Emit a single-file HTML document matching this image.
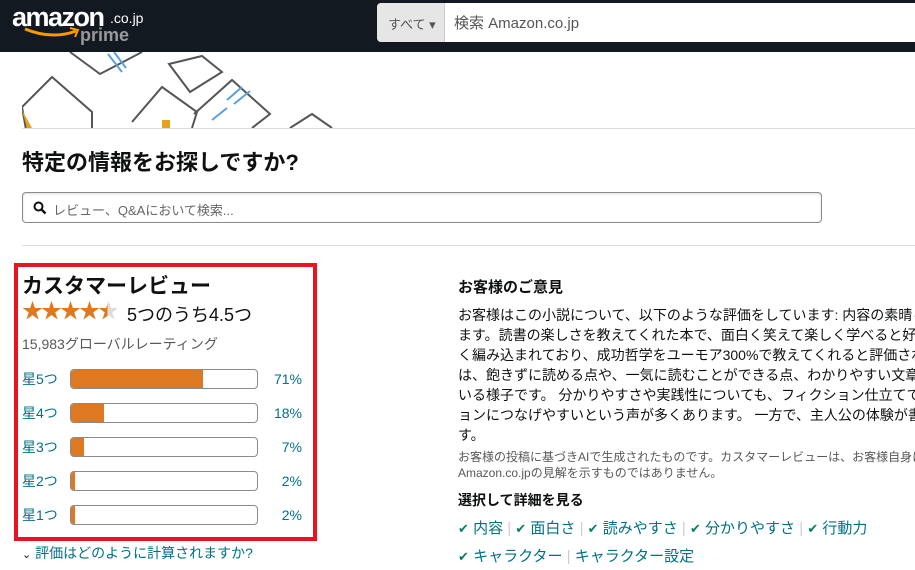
<!DOCTYPE html>
<html><head><meta charset="utf-8"><style>
*{margin:0;padding:0;box-sizing:border-box}
html,body{width:915px;height:570px;overflow:hidden}
body{background:#fff;font-family:"Liberation Sans","Noto Sans CJK JP",sans-serif;color:#0f1111;position:relative}
.a{position:absolute}
.hdr{left:0;top:0;width:915px;height:52px;background:#131921;overflow:hidden}
.srch{left:377px;top:3px;width:538px;height:39px;background:#fff;border-radius:4px 0 0 4px;overflow:hidden}
.all{left:0;top:0;width:68px;height:39px;background:#e6e6e6;border-radius:4px 0 0 4px;font-size:13px;color:#555;padding:11px 0 0 11px;border-right:1px solid #cdcdcd}
.bar{left:70px;width:188px;height:20px;border:1px solid #888c8c;border-radius:4px;overflow:hidden;background:#fff}
.bar i{display:block;height:100%;background:#de7921}
.lbl{left:22px;font-size:14px;line-height:20px;color:#007185}
.pct{width:60px;left:242px;text-align:right;font-size:14px;line-height:20px;color:#007185}
.ck{color:#067d62;font-size:13px}
.clip{overflow:hidden;white-space:nowrap}
</style></head><body>
<div class="a hdr">
  <div class="a" style="left:12px;top:2px;color:#fff;font-size:27px;font-weight:bold;letter-spacing:-1.5px">amazon</div>
  <div class="a" style="left:110px;top:10px;color:#fff;font-size:14px">.co.jp</div>
  <div class="a" style="left:80px;top:25px;color:#999;font-size:18px;font-weight:bold">prime</div>
  <svg class="a" style="left:22px;top:26px" width="60" height="14"><path d="M3 3 Q30 14 54 5" stroke="#ff9900" stroke-width="3" fill="none"/><path d="M48 2 L56 4 L53 11" stroke="#ff9900" stroke-width="2" fill="none"/></svg>
  <div class="a srch"><div class="a all">すべて ▾</div><div class="a" style="left:77px;top:9px;font-size:15px;color:#555">検索 Amazon.co.jp</div></div>
</div>
<svg class="a" style="left:22px;top:52px" width="320" height="76">
 <g stroke="#555" stroke-width="2" fill="none">
  <path d="M48 0 L78 22 L120 0"/><path d="M86 2 L100 20 M92 0 L104 16" stroke="#5aa0e0"/>
  <path d="M147 12 L180 4 L200 20 L168 40 Z"/><path d="M8 100 L0 55 L30 25 L70 60 L70 90"/>
  <path d="M110 70 L140 35 L175 60 L170 76"/><path d="M172 62 L210 28 L248 62 L230 76"/>
  <path d="M205 48 L220 35 M212 52 L228 39 M190 68 L205 56" stroke="#5aa0e0"/>
  <path d="M268 76 L290 62 L310 76"/>
 </g>
 <path d="M0 58 L10 76 L5 76 Z" fill="#e4a11b"/><rect x="140" y="68" width="8" height="8" fill="#e4a11b"/>
</svg>
<div class="a" style="left:22px;top:128px;width:893px;height:1px;background:#ddd"></div>
<div class="a" style="left:22px;top:145px;font-size:22px;font-weight:bold">特定の情報をお探しですか?</div>
<div class="a" style="left:22px;top:192px;width:800px;height:31px;border:1px solid #888c8c;border-radius:4px;box-shadow:0 1px 2px rgba(15,17,17,.15) inset">
 <svg class="a" style="left:10px;top:8px" width="14" height="14"><circle cx="5.5" cy="5.5" r="4" stroke="#111" stroke-width="2" fill="none"/><path d="M8.5 8.5 L12.5 12.5" stroke="#111" stroke-width="2.4"/></svg>
 <div class="a" style="left:30px;top:7px;font-size:13px;color:#666">レビュー、Q&amp;Aにおいて検索...</div>
</div>
<div class="a" style="left:22px;top:245px;width:893px;height:1px;background:#ddd"></div>

<div class="a" style="left:14px;top:263px;width:303px;height:278px;border:4px solid #e8141f"></div>
<div class="a" style="left:22px;top:270px;font-size:21px;font-weight:bold">カスタマーレビュー</div>
<div class="a" style="left:22px;top:300px;font-size:21px;line-height:24px;color:#de7921;letter-spacing:-2px">★★★★<span style="background:linear-gradient(90deg,#de7921 50%,#ddd 50%);-webkit-background-clip:text;color:transparent">★</span></div>
<div class="a" style="left:127px;top:301px;font-size:18px">5つのうち4.5つ</div>
<div class="a" style="left:22px;top:334px;font-size:14px;color:#565959">15,983グローバルレーティング</div>

<div class="a lbl" style="top:369px">星5つ</div><div class="a bar" style="top:369px"><i style="width:71%"></i></div><div class="a pct" style="top:369px">71%</div>
<div class="a lbl" style="top:403px">星4つ</div><div class="a bar" style="top:403px"><i style="width:18%"></i></div><div class="a pct" style="top:403px">18%</div>
<div class="a lbl" style="top:437px">星3つ</div><div class="a bar" style="top:437px"><i style="width:7%"></i></div><div class="a pct" style="top:437px">7%</div>
<div class="a lbl" style="top:471px">星2つ</div><div class="a bar" style="top:471px"><i style="width:2%"></i></div><div class="a pct" style="top:471px">2%</div>
<div class="a lbl" style="top:505px">星1つ</div><div class="a bar" style="top:505px"><i style="width:2%"></i></div><div class="a pct" style="top:505px">2%</div>
<div class="a" style="left:22px;top:543px;font-size:14px;color:#007185"><span style="color:#111;font-size:11px">⌄</span> 評価はどのように計算されますか?</div>

<div class="a" style="left:458px;top:276px;font-size:15px;font-weight:bold">お客様のご意見</div>
<div class="a clip" style="left:458px;top:305px;width:457px;font-size:14px;line-height:20px">お客様はこの小説について、以下のような評価をしています: 内容の素晴らしさを評価してい<br>ます。読書の楽しさを教えてくれた本で、面白く笑えて楽しく学べると好評です。ストーリーがよ<br>く編み込まれており、成功哲学をユーモア300%で教えてくれると評価されています。読みやすさ<br>は、飽きずに読める点や、一気に読むことができる点、わかりやすい文章で書かれていると感じて<br>いる様子です。 分かりやすさや実践性についても、フィクション仕立てで分かりやすく、アクシ<br>ョンにつなげやすいという声が多くあります。 一方で、主人公の体験が書かれているという声もありま<br>す。</div>
<div class="a clip" style="left:458px;top:449px;width:457px;font-size:12px;line-height:16px;color:#565959">お客様の投稿に基づきAIで生成されたものです。カスタマーレビューは、お客様自身による<br>Amazon.co.jpの見解を示すものではありません。</div>
<div class="a" style="left:458px;top:490px;font-size:14px;font-weight:bold">選択して詳細を見る</div>
<div class="a clip" style="left:458px;top:517px;width:457px;font-size:15px;color:#007185"><span class="ck">✔</span> 内容 <span style="color:#ccc">|</span> <span class="ck">✔</span> 面白さ <span style="color:#ccc">|</span> <span class="ck">✔</span> 読みやすさ <span style="color:#ccc">|</span> <span class="ck">✔</span> 分かりやすさ <span style="color:#ccc">|</span> <span class="ck">✔</span> 行動力</div>
<div class="a clip" style="left:458px;top:545px;width:457px;font-size:15px;color:#007185"><span class="ck">✔</span> キャラクター <span style="color:#ccc">|</span> キャラクター設定</div>
</body></html>
